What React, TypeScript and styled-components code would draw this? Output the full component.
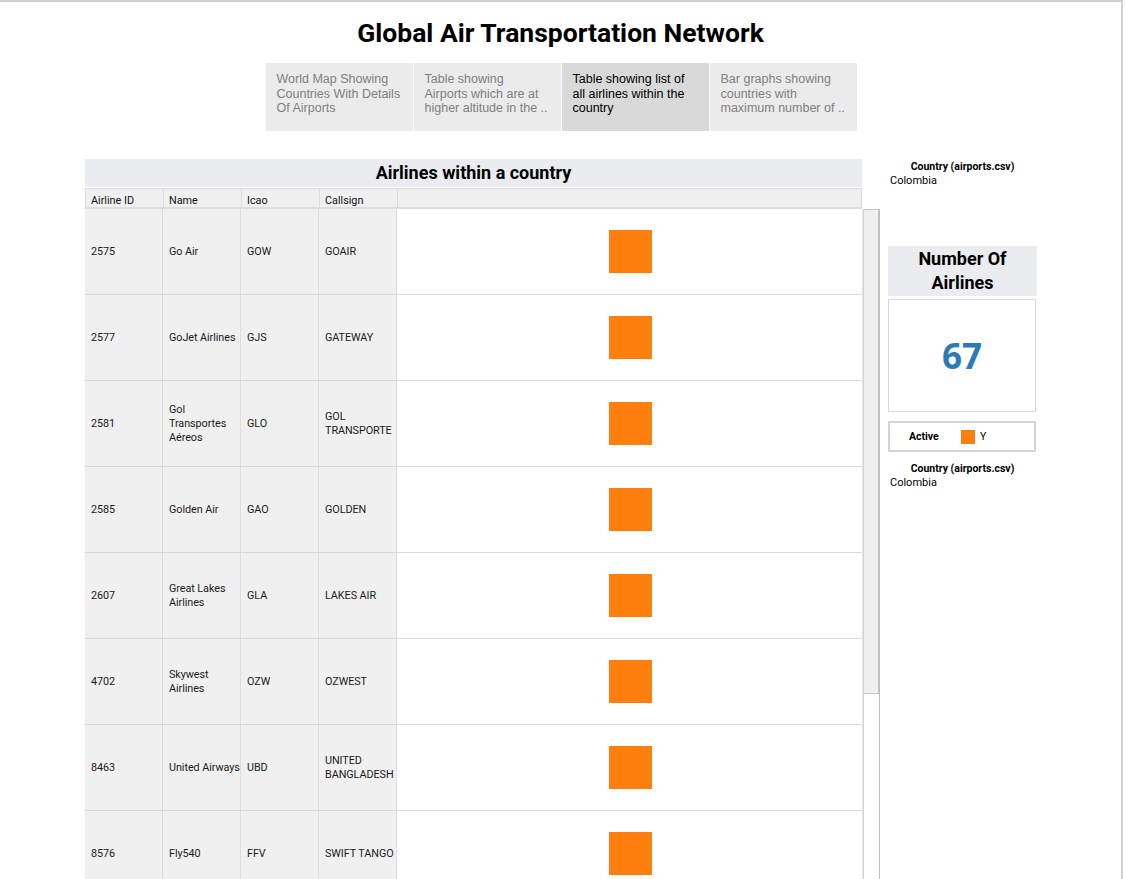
import React from "react";
import styled, { createGlobalStyle } from "styled-components";

const GlobalStyle = createGlobalStyle`
  html, body { margin: 0; padding: 0; background: #ffffff; }
  body { font-family: Roboto, "Liberation Sans", sans-serif; overflow: hidden; }
  * { box-sizing: border-box; }
`;

const Frame = styled.div`
  width: 1123px;
  height: 879px;
  border-top: 2px solid #cfcfcf;
  border-right: 2px solid #d2d2d2;
  overflow: hidden;
`;

const Title = styled.h1`
  margin: 0;
  padding-top: 16px;
  height: 61px;
  text-align: center;
  font-family: Roboto, sans-serif;
  font-weight: 700;
  font-size: 26.5px;
  line-height: 30px;
  color: #000;
`;

const Tabs = styled.nav`
  display: flex;
  justify-content: center;
  gap: 1px;
  padding-left: 1px;
`;

const Tab = styled.div<{ $active?: boolean }>`
  width: 147px;
  height: 68px;
  padding: 9px 6px 0 11px;
  background: ${(p) => (p.$active ? "#d9d9d9" : "#ebebeb")};
  color: ${(p) => (p.$active ? "#000" : "#808080")};
  font-family: "Liberation Sans", Arial, sans-serif;
  font-size: 12.5px;
  line-height: 14.5px;
  white-space: nowrap;
`;

const Main = styled.div`
  display: flex;
  gap: 8px;
  padding-left: 85px;
  margin-top: 28px;
`;

const Left = styled.section`
  width: 795px;
  display: flex;
  flex-direction: column;
`;

const SheetTitle = styled.div`
  width: 777px;
  height: 28px;
  background: #ebecef;
  text-align: center;
  font-weight: 700;
  font-size: 18px;
  line-height: 28px;
  color: #000;
`;

const cols = "78px 78px 78px 78px 1fr";

const HeaderRow = styled.div`
  width: 777px;
  margin-top: 1px;
  display: grid;
  grid-template-columns: ${cols};
  height: 21px;
  background: #f0f0f0;
  border-top: 1px solid #dcdcdc;
  border-bottom: 2px solid #dedede;
  border-left: 1px solid #dcdcdc;
  border-right: 1px solid #dcdcdc;
`;

const HeadCell = styled.div`
  padding: 0 0 0 5px;
  display: flex;
  align-items: flex-end;
  font-size: 10.8px;
  line-height: 12px;
  color: #111;
  border-right: 1px solid #dcdcdc;
  &:last-child { border-right: none; }
`;

const BodyWrap = styled.div`
  display: flex;
  align-items: flex-start;
`;

const Rows = styled.div`
  width: 778px;
  display: flex;
  flex-direction: column;
`;

const Row = styled.div`
  display: grid;
  grid-template-columns: ${cols};
  height: 86px;
  flex-shrink: 0;
  border-bottom: 1px solid #dadada;
`;

const Cell = styled.div`
  background: #f0f0f0;
  border-right: 1px solid #dcdcdc;
  padding: 0 0 0 6px;
  display: flex;
  align-items: center;
  font-size: 10.8px;
  letter-spacing: -0.06px;
  line-height: 14px;
  color: #1a1a1a;
`;

const BarCell = styled.div`
  background: #fff;
  display: flex;
  align-items: center;
  justify-content: center;
  padding-left: 2px;
  border-right: 1px solid #e4e4e4;
`;

const Mark = styled.div<{ $size: number }>`
  width: ${(p) => p.$size}px;
  height: ${(p) => p.$size}px;
  background: #ff7f0e;
  flex-shrink: 0;
`;

const Scrollbar = styled.div`
  width: 17px;
  height: 700px;
  border-left: 1px solid #d6d6d6;
  border-right: 1px solid #bdbdbd;
  background: #fff;
`;

const Thumb = styled.div`
  height: 485px;
  background: #efefef;
  border: 1px solid #c4c4c4;
  border-left: none;
`;

const Right = styled.aside`
  width: 149px;
  display: flex;
  flex-direction: column;
`;

const FilterLabel = styled.div`
  text-align: center;
  font-weight: 700;
  font-size: 10.5px;
  line-height: 14px;
  color: #000;
  padding-top: 1px;
`;

const FilterValue = styled.div`
  padding-left: 2px;
  font-size: 11px;
  line-height: 13px;
  color: #000;
`;

const KpiTitle = styled.div`
  margin-top: 59px;
  height: 50px;
  background: #ebecef;
  text-align: center;
  font-weight: 700;
  font-size: 18px;
  line-height: 24px;
  padding-top: 1px;
  color: #000;
`;

const KpiValue = styled.div`
  margin-top: 3px;
  width: 148px;
  height: 113px;
  border: 1px solid #d9d9d9;
  display: flex;
  align-items: center;
  justify-content: center;
  font-family: "Open Sans", sans-serif;
  font-weight: 700;
  font-size: 35px;
  color: #2b7bb9;
`;

const Legend = styled.div`
  margin-top: 9px;
  width: 148px;
  height: 31px;
  border: 2px solid #d4d4d0;
  display: flex;
  align-items: center;
  padding-left: 19px;
  font-size: 10.5px;
  color: #000;
`;

const LegendTitle = styled.span`
  font-weight: 700;
  width: 52px;
`;

const LegendItem = styled.span`
  display: flex;
  align-items: center;
  gap: 5px;
`;

const SecondFilter = styled.div`
  margin-top: 9px;
`;

const airlines = [
  ["2575", "Go Air", "GOW", "GOAIR"],
  ["2577", "GoJet Airlines", "GJS", "GATEWAY"],
  ["2581", "Gol Transportes Aéreos", "GLO", "GOL TRANSPORTE"],
  ["2585", "Golden Air", "GAO", "GOLDEN"],
  ["2607", "Great Lakes Airlines", "GLA", "LAKES AIR"],
  ["4702", "Skywest Airlines", "OZW", "OZWEST"],
  ["8463", "United Airways", "UBD", "UNITED BANGLADESH"],
  ["8576", "Fly540", "FFV", "SWIFT TANGO"],
];

const tabs = [
  ["World Map Showing", "Countries With Details", "Of Airports"],
  ["Table showing", "Airports which are at", "higher altitude in the .."],
  ["Table showing list of", "all airlines within the", "country"],
  ["Bar graphs showing", "countries with", "maximum number of .."],
];

export default function App() {
  return (
    <>
      <GlobalStyle />
      <Frame>
        <Title>Global Air Transportation Network</Title>
        <Tabs>
          {tabs.map((t, i) => (
            <Tab key={i} $active={i === 2}>
              {t[0]}
              <br />
              {t[1]}
              <br />
              {t[2]}
            </Tab>
          ))}
        </Tabs>
        <Main>
          <Left>
            <SheetTitle>Airlines within a country</SheetTitle>
            <HeaderRow>
              <HeadCell>Airline ID</HeadCell>
              <HeadCell>Name</HeadCell>
              <HeadCell>Icao</HeadCell>
              <HeadCell>Callsign</HeadCell>
              <HeadCell />
            </HeaderRow>
            <BodyWrap>
              <Rows>
                {airlines.map((a) => (
                  <Row key={a[0]}>
                    <Cell>{a[0]}</Cell>
                    <Cell>{a[1]}</Cell>
                    <Cell>{a[2]}</Cell>
                    <Cell>{a[3]}</Cell>
                    <BarCell>
                      <Mark $size={43} />
                    </BarCell>
                  </Row>
                ))}
              </Rows>
              <Scrollbar>
                <Thumb />
              </Scrollbar>
            </BodyWrap>
          </Left>
          <Right>
            <FilterLabel>Country (airports.csv)</FilterLabel>
            <FilterValue>Colombia</FilterValue>
            <KpiTitle>
              Number Of
              <br />
              Airlines
            </KpiTitle>
            <KpiValue>67</KpiValue>
            <Legend>
              <LegendTitle>Active</LegendTitle>
              <LegendItem>
                <Mark $size={14} />Y
              </LegendItem>
            </Legend>
            <SecondFilter>
              <FilterLabel>Country (airports.csv)</FilterLabel>
              <FilterValue>Colombia</FilterValue>
            </SecondFilter>
          </Right>
        </Main>
      </Frame>
    </>
  );
}
